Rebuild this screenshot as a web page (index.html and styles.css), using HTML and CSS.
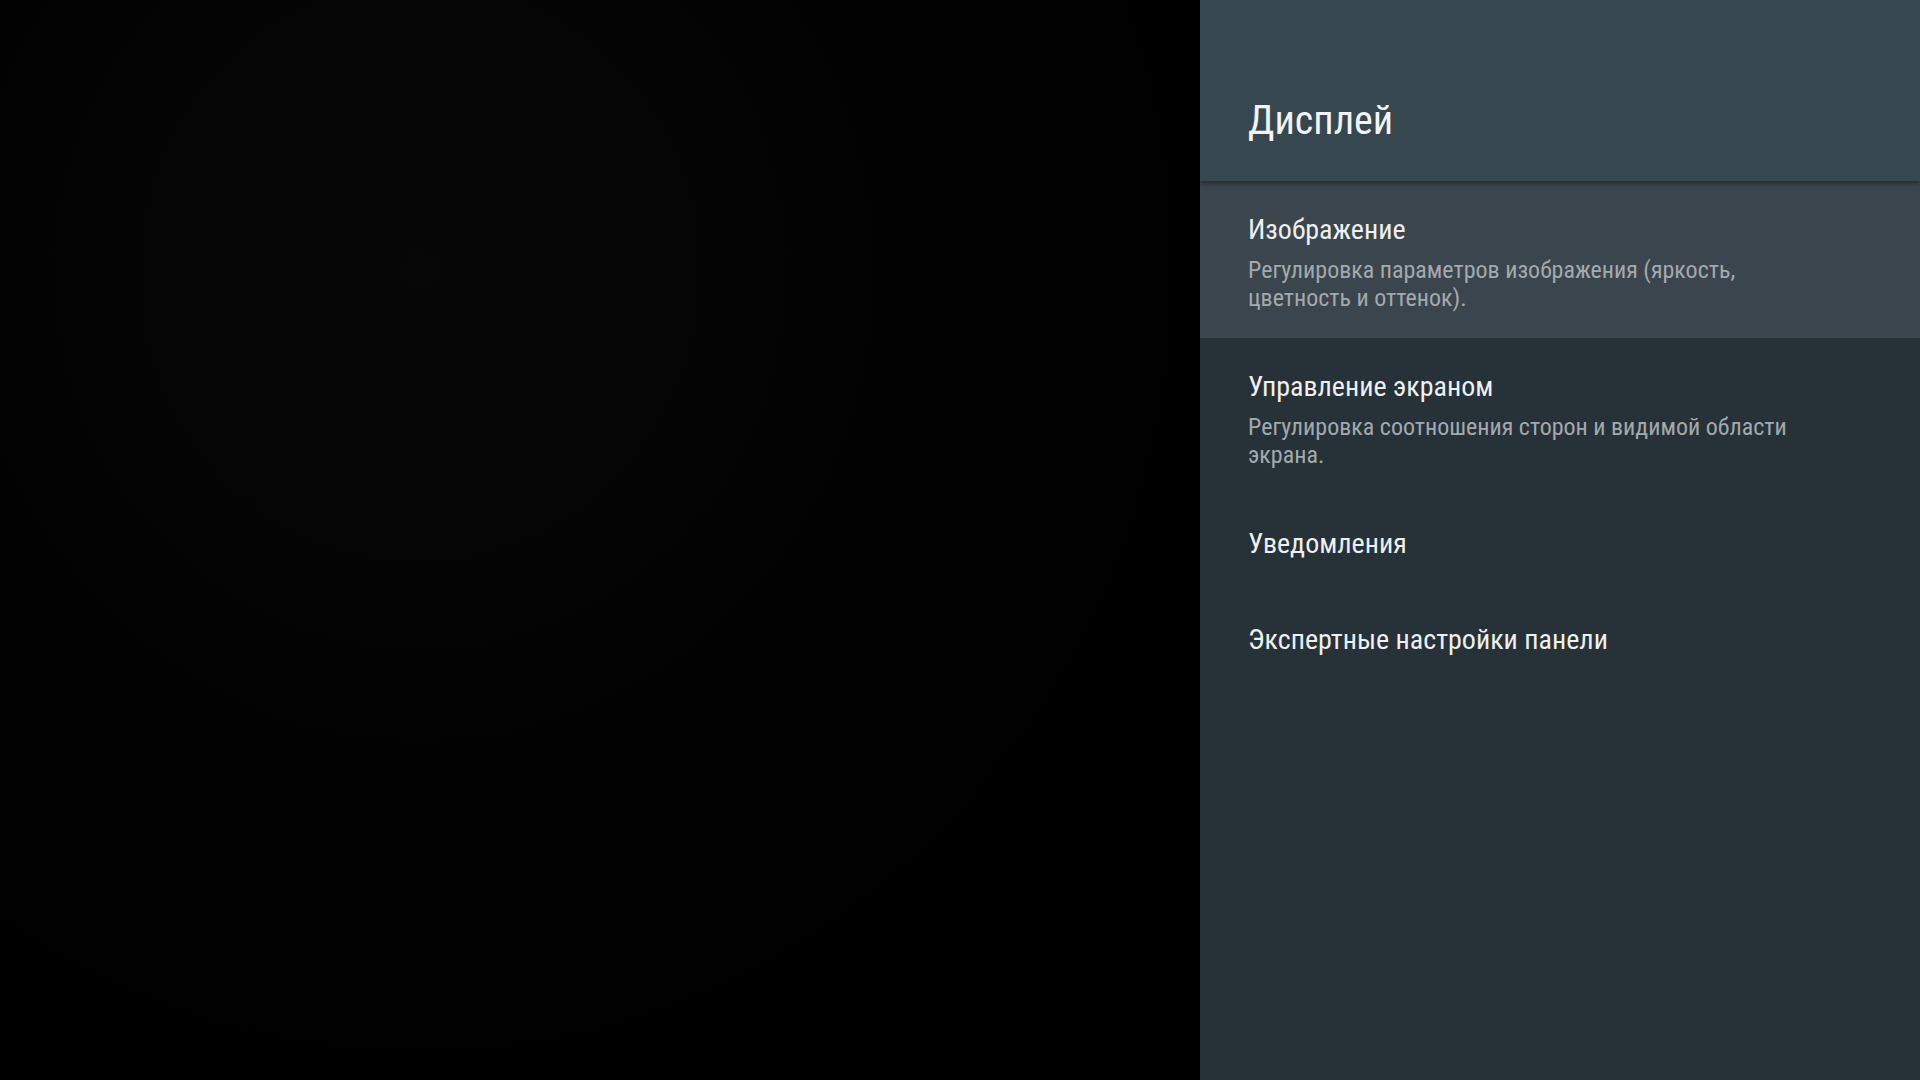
FILE: index.html
```html
<!DOCTYPE html>
<html lang="ru">
<head>
<meta charset="utf-8">
<title>Дисплей</title>
<link rel="stylesheet" href="styles.css">
</head>
<body>
<div class="screen">
  <div class="backdrop"></div>
  <aside class="panel">
    <header class="panel-header">
      <h1 class="panel-title">Дисплей</h1>
    </header>
    <ul class="menu">
      <li class="item with-desc selected">
        <div class="item-title">Изображение</div>
        <div class="item-desc">Регулировка параметров изображения (яркость, цветность и оттенок).</div>
      </li>
      <li class="item with-desc">
        <div class="item-title">Управление экраном</div>
        <div class="item-desc">Регулировка соотношения сторон и видимой области экрана.</div>
      </li>
      <li class="item">
        <div class="item-title">Уведомления</div>
      </li>
      <li class="item">
        <div class="item-title">Экспертные настройки панели</div>
      </li>
    </ul>
  </aside>
</div>
</body>
</html>
```

FILE: styles.css
```css
html, body {
  margin: 0;
  padding: 0;
  width: 1920px;
  height: 1080px;
  overflow: hidden;
  background: #000;
}

.screen {
  display: flex;
  width: 1920px;
  height: 1080px;
  font-family: "Roboto Condensed", "Liberation Sans Narrow", "DejaVu Sans Condensed", Roboto, sans-serif;
  font-stretch: condensed;
}

.backdrop {
  width: 1200px;
  height: 100%;
  background: radial-gradient(ellipse at 35% 25%, #070707 0%, #020202 45%, #000 80%);
}

.panel {
  width: 720px;
  height: 100%;
  background: #263238;
  display: flex;
  flex-direction: column;
}

.panel-header {
  height: 181px;
  background: #37474f;
  box-sizing: border-box;
  padding: 0 48px;
  display: flex;
  align-items: flex-end;
  position: relative;
  z-index: 1;
  box-shadow: 0 2px 5px rgba(0, 0, 0, 0.45);
}

.panel-title {
  margin: 0 0 36px 0;
  font-size: 40px;
  font-weight: 400;
  line-height: 48px;
  color: #f2f4f5;
}

.menu {
  list-style: none;
  margin: 0;
  padding: 0;
}

.item {
  box-sizing: border-box;
  padding: 33px 48px 31px 48px;
}

.item.with-desc {
  padding-bottom: 26px;
}

.item.selected {
  background: #3b454d;
}

.item-title {
  font-size: 28px;
  line-height: 32px;
  color: #eef0f1;
}

.item-desc {
  margin-top: 10px;
  font-size: 24px;
  line-height: 28px;
  color: #a3aaae;
  max-width: 570px;
}
```
